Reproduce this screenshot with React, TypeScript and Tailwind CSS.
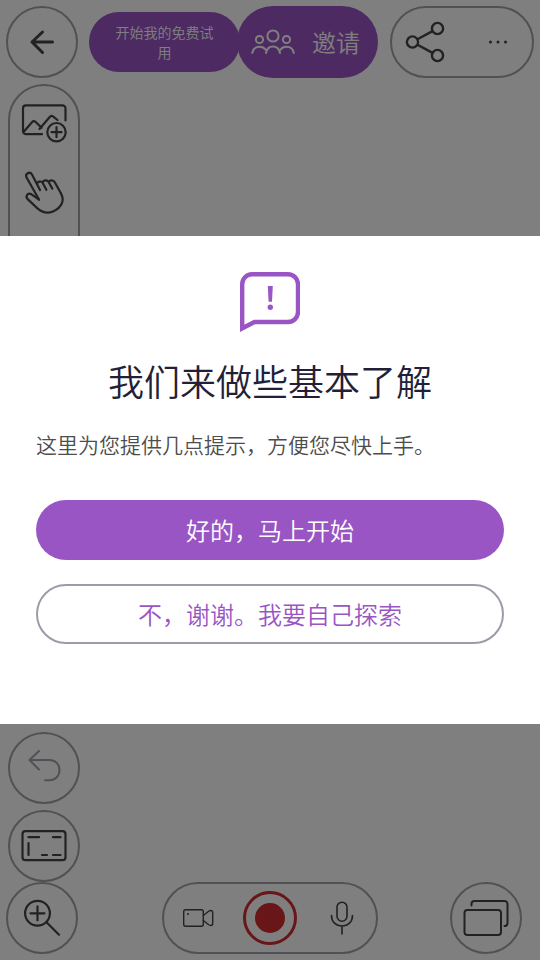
import React from 'react';

interface IconProps {
  className?: string;
}

const stroke = {
  fill: 'none',
  stroke: 'currentColor',
  strokeLinecap: 'round',
  strokeLinejoin: 'round'
} as const;

const BackIcon = ({ className }: IconProps) => (
  <svg viewBox="0 0 72 72" className={className} {...stroke} strokeWidth={3} aria-hidden="true">
    <path d="M46.500 36H26M36.500 26L26 36l10.500 10.500" />
  </svg>
);

const PeopleIcon = ({ className }: IconProps) => (
  <svg viewBox="0 0 44 26" className={className} {...stroke} strokeWidth={2} aria-hidden="true">
    <circle cx="22" cy="7" r="5.600" />
    <circle cx="8.500" cy="10.500" r="3.600" />
    <circle cx="35.500" cy="10.500" r="3.600" />
    <path d="M15 24c.8-4.200 3.500-6.400 7-6.400s6.200 2.200 7 6.400" />
    <path d="M1.200 24c.8-4 3.600-6.200 7.300-6.200 2.800 0 4.800 1 6.300 3" />
    <path d="M42.800 24c-.8-4-3.600-6.200-7.300-6.200-2.800 0-4.800 1-6.300 3" />
  </svg>
);

const ShareIcon = ({ className }: IconProps) => (
  <svg viewBox="0 0 72 72" className={className} {...stroke} strokeWidth={2.4} aria-hidden="true">
    <circle cx="22.500" cy="36" r="5.600" />
    <circle cx="47.500" cy="22.500" r="5.600" />
    <circle cx="47.500" cy="49.500" r="5.600" />
    <path d="M27.500 33.200l15-8.100M27.500 38.800l15 8.100" />
  </svg>
);

const MoreIcon = ({ className }: IconProps) => (
  <svg viewBox="0 0 72 72" className={className} fill="currentColor" aria-hidden="true">
    <circle cx="28.500" cy="36" r="1.500" />
    <circle cx="36" cy="36" r="1.500" />
    <circle cx="43.500" cy="36" r="1.500" />
  </svg>
);

const AddImageIcon = ({ className }: IconProps) => (
  <svg viewBox="0 0 72 72" className={className} {...stroke} strokeWidth={2.2} aria-hidden="true">
    <path d="M34 48.200H18a3 3 0 0 1-3-3V22.400a3 3 0 0 1 3-3h36.500a3 3 0 0 1 3 3V34.500" />
    <path d="M15.500 46l8.700-10c1-1.200 2.200-1.200 3.200-.2l6.200 6" />
    <path d="M31.500 43l10.200-12c1.100-1.300 2.400-1.400 3.600-.3L49.500 34" />
    <circle cx="48.500" cy="46.200" r="9.200" />
    <path d="M48.500 41.200v10M43.500 46.200h10" />
  </svg>
);

const HandIcon = ({ className }: IconProps) => (
  <svg viewBox="0 0 72 72" className={className} {...stroke} strokeWidth={2.2} aria-hidden="true">
    <path d="M31 41.500L18.700 19.800c-1-1.800-.6-3.600 1-4.500s3.300-.5 4.300 1.200l8 15.500" />
    <path d="M29 26c.2-2.500 4.200-3.500 5.600-1.200l3.800 7M34.600 24.500c.8-2.400 4.600-2.900 6-.5l3.700 6.600M40.800 24c1.200-2.300 4.700-2.200 6 .2L53 35.500" />
    <path d="M31 41.500L23.500 36.300c-1.700-1-3.600-.7-4.500.8-.9 1.400-.5 3 .9 4.300l9 8.500c4.600 4.300 10.600 6.200 16.600 3.300C53.800 49.300 56.800 42.500 53 35.500" />
  </svg>
);

const UndoIcon = ({ className }: IconProps) => (
  <svg viewBox="0 0 72 72" className={className} {...stroke} strokeWidth={2} aria-hidden="true">
    <path d="M31 19L21.500 28l9.500 9.500M22 28h19.500c6 0 10 4.300 10 10s-4 10.200-10 10.200H37" />
  </svg>
);

const FrameIcon = ({ className }: IconProps) => (
  <svg viewBox="0 0 72 72" className={className} {...stroke} strokeWidth={2.2} aria-hidden="true">
    <rect x="14.500" y="21.200" width="43" height="29" rx="3" />
    <path d="M20.500 27.200h10.500M45 27.200h7.500M20.500 33v12M34 45h5M45 45h7.500" />
  </svg>
);

const ZoomInIcon = ({ className }: IconProps) => (
  <svg viewBox="0 0 72 72" className={className} {...stroke} strokeWidth={2.2} aria-hidden="true">
    <circle cx="31.500" cy="31.300" r="12.400" />
    <path d="M31.500 24.300v14M24.500 31.300h14M40.500 40.300l12.500 12.400" />
  </svg>
);

const CameraIcon = ({ className }: IconProps) => (
  <svg viewBox="0 0 72 72" className={className} {...stroke} strokeWidth={1.4} aria-hidden="true">
    <rect x="21.700" y="27.700" width="19.600" height="16.600" rx="2" />
    <path d="M41.300 33.500l5.400-4.300c.7-.5 1.200-.7 2-.7 1.200 0 2 .7 2 2v11c0 1.300-.8 2-2 2-.8 0-1.300-.2-2-.7l-5.400-4.300" />
    <circle cx="26" cy="32" r="1" fill="currentColor" stroke="none" />
  </svg>
);

const MicIcon = ({ className }: IconProps) => (
  <svg viewBox="0 0 72 72" className={className} {...stroke} strokeWidth={1.6} aria-hidden="true">
    <rect x="31" y="20.200" width="10" height="19" rx="5" />
    <path d="M25.500 33.500C25.500 40 30 44 36 44s10.500-4 10.500-10.500M36 44v8" />
  </svg>
);

const PagesIcon = ({ className }: IconProps) => (
  <svg viewBox="0 0 72 72" className={className} {...stroke} strokeWidth={2} aria-hidden="true">
    <rect x="14.500" y="28" width="36.500" height="25" rx="3" />
    <path d="M21.500 23.500V22a3 3 0 0 1 3-3h30a3 3 0 0 1 3 3v19.500a3 3 0 0 1-3 2.500" />
  </svg>
);

const TipIcon = ({ className }: IconProps) => (
  <svg viewBox="0 0 60 60" className={className} aria-hidden="true">
    <path
      d="M12 2.200h36a10 10 0 0 1 10 10V40a10 10 0 0 1-10 10H14.500L2.200 56.300V12.200A10 10 0 0 1 12 2.200z"
      fill="none"
      stroke="currentColor"
      strokeWidth="4.400"
    />
    <path d="M27.800 14h5l-.8 15.700h-3.400z" fill="currentColor" />
    <circle cx="30.300" cy="35.200" r="2.700" fill="currentColor" />
  </svg>
);

interface RoundButtonProps {
  label: string;
  className?: string;
  children: React.ReactNode;
}

const RoundButton: React.FC<RoundButtonProps> = ({ label, className = '', children }) => (
  <button
    type="button"
    aria-label={label}
    className={`flex size-18 shrink-0 items-center justify-center rounded-full border-2 border-[#a3a3ab] ${className}`}
  >
    {children}
  </button>
);

const TopBar = () => (
  <header className="flex items-center justify-between p-1.5">
    <RoundButton label="返回">
      <BackIcon className="size-18 shrink-0" />
    </RoundButton>
    <div className="flex items-center">
      <button
        type="button"
        className="h-15 w-[151px] rounded-full bg-[#9a55c5] px-6 pb-px text-sm/5 text-white"
      >
        开始我的免费试用
      </button>
      <button
        type="button"
        className="-ml-[3px] flex h-18 items-center gap-[17px] rounded-full bg-[#9a55c5] pr-[18px] pl-[14px] text-2xl text-white"
      >
        <PeopleIcon className="w-11" />
        邀请
      </button>
      <div className="ml-3 flex h-18 w-36 items-center justify-center rounded-full border-2 border-[#a3a3ab]">
        <button type="button" aria-label="分享" className="shrink-0">
          <ShareIcon className="size-18" />
        </button>
        <button type="button" aria-label="更多" className="shrink-0">
          <MoreIcon className="size-18" />
        </button>
      </div>
    </div>
  </header>
);

const SideTools = () => (
  <nav className="flex flex-1 flex-col gap-1.5 px-2">
    <div className="mb-3 flex w-18 flex-1 flex-col items-center rounded-full border-2 border-[#a3a3ab]">
      <button type="button" aria-label="添加图片">
        <AddImageIcon className="size-18" />
      </button>
      <button type="button" aria-label="选择">
        <HandIcon className="size-18" />
      </button>
    </div>
    <RoundButton label="撤消" className="text-[#a3a3ab]">
      <UndoIcon className="size-18 shrink-0" />
    </RoundButton>
    <RoundButton label="画布">
      <FrameIcon className="size-18 shrink-0" />
    </RoundButton>
  </nav>
);

const BottomBar = () => (
  <footer className="grid grid-cols-[1fr_auto_1fr] items-center px-1.5 pb-1.5">
    <RoundButton label="放大">
      <ZoomInIcon className="size-18 shrink-0" />
    </RoundButton>
    <div className="flex h-18 w-54 items-center justify-center rounded-full border-2 border-[#a3a3ab]">
      <button type="button" aria-label="摄像头" className="shrink-0">
        <CameraIcon className="size-18" />
      </button>
      <div className="flex w-18 shrink-0 justify-center">
        <button
          type="button"
          aria-label="录制"
          className="flex size-[54px] items-center justify-center rounded-full border-3 border-[#d22c30]"
        >
          <span className="size-[30px] rounded-full bg-[#d22c30]" />
        </button>
      </div>
      <button type="button" aria-label="麦克风" className="shrink-0">
        <MicIcon className="size-18" />
      </button>
    </div>
    <RoundButton label="页面" className="mr-3 justify-self-end">
      <PagesIcon className="size-18 shrink-0" />
    </RoundButton>
  </footer>
);

const WelcomeDialog = () => (
  <div className="fixed inset-0 flex items-center bg-black/50">
    <div
      role="dialog"
      aria-modal="true"
      aria-labelledby="welcome-title"
      className="flex w-full flex-col bg-white px-9 pt-9 pb-20"
    >
      <TipIcon className="size-15 self-center text-[#9a55c5]" />
      <h1 id="welcome-title" className="mt-6 text-center text-4xl/12 text-[#231f38]">
        我们来做些基本了解
      </h1>
      <p className="mt-6 text-[21px]/8 text-[#4d4d4d]">这里为您提供几点提示，方便您尽快上手。</p>
      <button type="button" className="mt-10 h-15 rounded-full bg-[#9a55c5] text-2xl text-white">
        好的，马上开始
      </button>
      <button
        type="button"
        className="mt-6 h-15 rounded-full border-2 border-[#9e9ba9] text-2xl text-[#9a55c5]"
      >
        不，谢谢。我要自己探索
      </button>
    </div>
  </div>
);

export default function App() {
  return (
    <div
      lang="zh-CN"
      className="flex h-screen flex-col bg-white font-['Noto_Sans_CJK_SC',sans-serif] font-[350] text-[#444444]"
    >
      <TopBar />
      <SideTools />
      <BottomBar />
      <WelcomeDialog />
    </div>
  );
}
